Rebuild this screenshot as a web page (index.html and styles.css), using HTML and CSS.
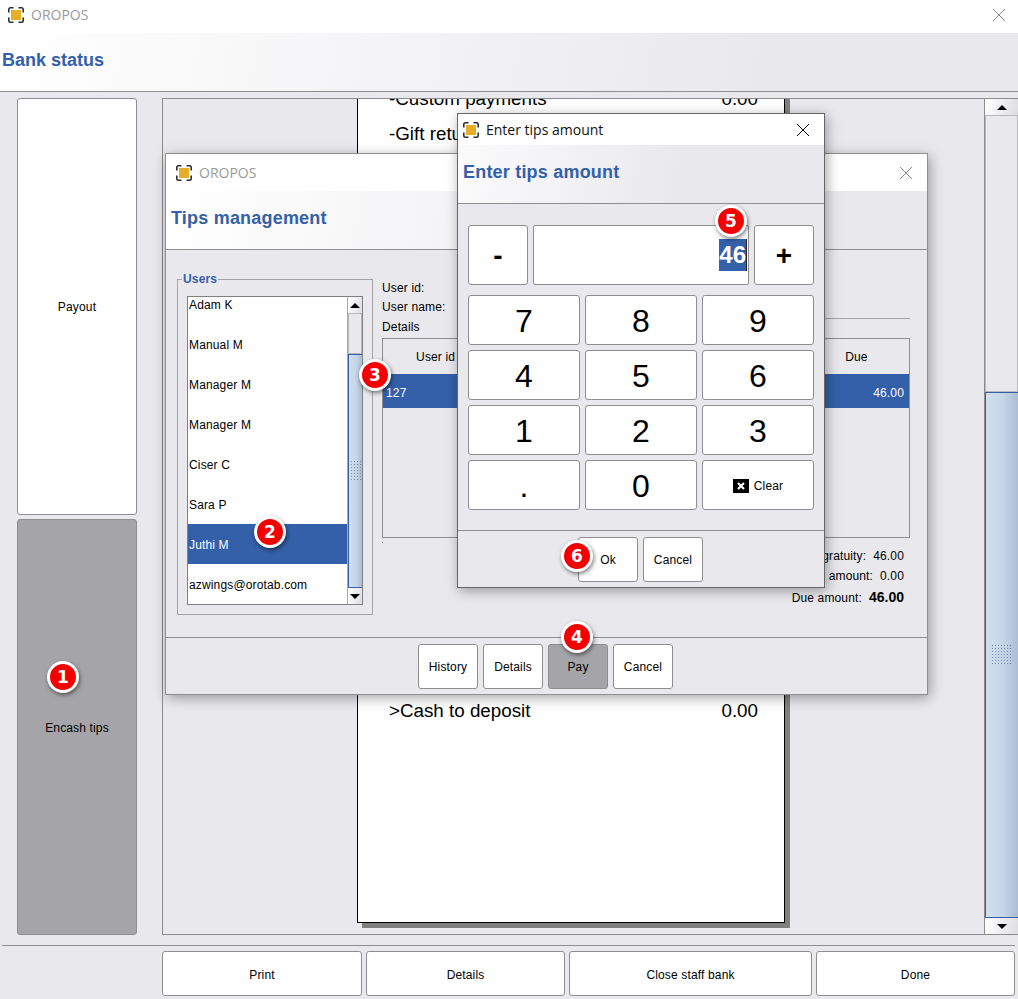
FILE: index.html
```html
<!DOCTYPE html>
<html lang="en">
<head>
  <meta charset="UTF-8" />
  <meta name="viewport" content="width=device-width, initial-scale=1" />
  <title>OROPOS</title>
  <link rel="stylesheet" href="styles.css">
</head>
<body>

  <svg class="defs" width="0" height="0">
    <symbol id="logo" viewBox="0 0 16 16">
      <path d="M0.800 5.500V2.300A1.500 1.500 0 0 1 2.300 0.800H5.500M10.500 0.800h3.200A1.500 1.500 0 0 1 15.200 2.300V5.500M15.200 10.500v3.200a1.500 1.500 0 0 1-1.500 1.500H10.500M5.500 15.200H2.300A1.500 1.500 0 0 1 0.800 13.700V10.500" fill="none" stroke="#2b2e36" stroke-width="1.600"/>
      <rect x="3" y="3" width="10" height="10" fill="#e5ae24"/>
    </symbol>
    <symbol id="close" viewBox="0 0 14 14">
      <path d="M1 1l12 12M13 1L1 13" fill="none" stroke="currentColor" stroke-width="1"/>
    </symbol>
  </svg>

  <div class="app">
    <div class="titlebar titlebar-main">
      <svg class="logo"><use href="#logo"/></svg>
      <span class="title-text">OROPOS</span>
      <svg class="close-x"><use href="#close"/></svg>
    </div>
    <div class="header"><h1>Bank status</h1></div>

    <div class="main">
      <div class="side">
        <button class="btn">Payout</button>
        <button class="btn btn-active">Encash tips</button>
      </div>
      <div class="report">
        <div class="report-view">
          <div class="paper">
            <div class="paper-row"><span>-Custom payments</span><span>0.00</span></div>
            <div class="paper-row"><span>-Gift returns</span><span>0.00</span></div>
            <div class="paper-row paper-total"><span>&gt;Cash to deposit</span><span>0.00</span></div>
          </div>
        </div>
        <div class="scrollbar scrollbar-wide">
          <div class="arrow arrow-up"></div>
          <div class="track track-main"></div>
          <div class="thumb thumb-main"><i class="grip"></i></div>
          <div class="arrow arrow-down"></div>
        </div>
      </div>
    </div>

    <div class="bottom">
      <button class="btn btn-print">Print</button>
      <button class="btn btn-details">Details</button>
      <button class="btn btn-closebank">Close staff bank</button>
      <button class="btn btn-done">Done</button>
    </div>
  </div>

  <!-- tips window -->
  <div class="dialog dialog-tips">
    <div class="titlebar titlebar-tips">
      <svg class="logo"><use href="#logo"/></svg>
      <span class="title-text">OROPOS</span>
      <svg class="close-x"><use href="#close"/></svg>
    </div>
    <div class="header header-tips"><h2>Tips management</h2></div>
    <div class="tips-body">
      <fieldset class="users">
        <legend>Users</legend>
        <div class="list">
          <div class="list-rows">
            <div class="list-row list-first">Adam K</div>
            <div class="list-row">Manual M</div>
            <div class="list-row">Manager M</div>
            <div class="list-row">Manager M</div>
            <div class="list-row">Ciser C</div>
            <div class="list-row">Sara P</div>
            <div class="list-row list-selected">Juthi M</div>
            <div class="list-row">azwings@orotab.com</div>
          </div>
          <div class="scrollbar">
            <div class="arrow arrow-up"></div>
            <div class="track track-list"></div>
            <div class="thumb thumb-list"><i class="grip"></i></div>
            <div class="arrow arrow-down"></div>
          </div>
        </div>
      </fieldset>
      <div class="info">
        <div class="info-row">User id:</div>
        <div class="info-row info-name"><span>User name:</span><span class="info-line"></span></div>
        <div class="info-row info-details">Details</div>
        <div class="table">
          <div class="table-head">
            <div>User id</div><div></div><div></div><div></div><div>Due</div>
          </div>
          <div class="table-row">
            <div>127</div><div></div><div></div><div></div><div class="num">46.00</div>
          </div>
        </div>
        <div class="table-dot"></div>
        <div class="totals">
          <div>Total gratuity:&nbsp; 46.00</div>
          <div>Paid amount:&nbsp; 0.00</div>
          <div class="total-due">Due amount:&nbsp; <b>46.00</b></div>
        </div>
      </div>
    </div>
    <div class="dialog-footer footer-tips">
      <button class="btn btn-small">History</button>
      <button class="btn btn-small">Details</button>
      <button class="btn btn-small btn-active">Pay</button>
      <button class="btn btn-small">Cancel</button>
    </div>
  </div>

  <!-- amount window -->
  <div class="dialog dialog-amount">
    <div class="titlebar titlebar-amount">
      <svg class="logo"><use href="#logo"/></svg>
      <span class="title-text">Enter tips amount</span>
      <svg class="close-x"><use href="#close"/></svg>
    </div>
    <div class="header header-amount"><h2>Enter tips amount</h2></div>
    <div class="amount-body">
      <div class="amount-row">
        <button class="btn btn-sign">-</button>
        <div class="amount-field"><span class="amount-value">46</span></div>
        <button class="btn btn-sign">+</button>
      </div>
      <div class="keypad">
        <button class="btn btn-key">7</button>
        <button class="btn btn-key">8</button>
        <button class="btn btn-key">9</button>
        <button class="btn btn-key">4</button>
        <button class="btn btn-key">5</button>
        <button class="btn btn-key">6</button>
        <button class="btn btn-key">1</button>
        <button class="btn btn-key">2</button>
        <button class="btn btn-key">3</button>
        <button class="btn btn-key">.</button>
        <button class="btn btn-key">0</button>
        <button class="btn btn-clear">
          <svg class="clear-icon" viewBox="0 0 16 14"><rect width="16" height="14" fill="#000"/><path d="M5 4l6 6M11 4l-6 6" stroke="#fff" stroke-width="2.200"/></svg>
          Clear
        </button>
      </div>
    </div>
    <div class="dialog-footer">
      <button class="btn btn-small">Ok</button>
      <button class="btn btn-small">Cancel</button>
    </div>
  </div>

  <span class="badge badge-1">1</span>
  <span class="badge badge-2">2</span>
  <span class="badge badge-3">3</span>
  <span class="badge badge-4">4</span>
  <span class="badge badge-5">5</span>
  <span class="badge badge-6">6</span>

</body>
</html>
```

FILE: styles.css
```css
* {
  box-sizing: border-box;
}

body {
  margin: 0;
  background-color: #e9e8ec;
  color: #000;
  font-family: 'Liberation Sans', Arial, sans-serif;
  font-size: 12px;
  letter-spacing: 0.15px;
  overflow: hidden;
}

.defs {
  position: absolute;
}

.app {
  display: flex;
  flex-direction: column;
  width: 1018px;
  height: 999px;
}

/* window title bars */
.titlebar {
  display: flex;
  align-items: center;
  height: 33px;
  padding: 0 12px 0 8px;
  background-color: #fff;
  flex: none;
}

.titlebar-main {
  padding-bottom: 4px;
}

.logo {
  width: 16px;
  height: 16px;
  flex: none;
}

.title-text {
  margin-left: 7px;
  color: #9a9a9a;
  font-family: 'Open Sans', sans-serif;
  font-size: 14px;
  letter-spacing: 0;
}

.close-x {
  width: 14px;
  height: 14px;
  margin-left: auto;
  color: #8a8a8a;
}

.titlebar-tips {
  height: 37px;
  padding: 0 14px 0 10px;
}

.titlebar-amount {
  height: 31px;
  padding: 0 14px 0 5px;
}

.titlebar-amount .title-text {
  color: #111;
}

.titlebar-amount .close-x {
  color: #000;
}

/* blue headers */
.header {
  display: flex;
  align-items: center;
  height: 59px;
  padding: 0 0 4px 2px;
  background: linear-gradient(100deg, #fff 0%, #e9e8ec 75%);
  border-bottom: 1px solid #8f8f8f;
  flex: none;
}

.header h1, .header h2 {
  margin: 0;
  color: #3360a9;
  font-size: 18px;
  font-weight: bold;
  letter-spacing: 0;
}

.header h2 {
  letter-spacing: 0.2px;
}

.header-tips {
  padding: 0 0 4px 5px;
}

.header-amount {
  padding: 0 0 4px 5px;
  background: linear-gradient(100deg, #fbfbfc 0%, #e9e8ec 60%);
}

/* buttons */
.btn {
  background-color: #fff;
  color: #000;
  border: 1px solid #8e8e8e;
  border-radius: 3px;
  padding: 2px 0 0;
  font-family: 'Liberation Sans', Arial, sans-serif;
  font-size: 12px;
  letter-spacing: 0.15px;
}

.btn-active {
  background-color: #a5a5a9;
}

/* main area */
.main {
  display: flex;
  height: 844px;
  padding: 6px 0 0 17px;
  flex: none;
}

.side {
  display: flex;
  flex-direction: column;
  gap: 4px;
  width: 120px;
  height: 837px;
  flex: none;
}

.side .btn {
  flex: 1;
}

.report {
  display: flex;
  width: 856px;
  height: 837px;
  margin-left: 25px;
  border: 1px solid #8c8c8c;
  border-right: none;
  flex: none;
}

.report-view {
  display: flex;
  flex-direction: column;
  justify-content: flex-end;
  flex: 1;
  overflow: hidden;
  padding: 0 0 11px 194px;
}

.paper {
  width: 428px;
  padding: 0 26px 194px 31px;
  background-color: #fff;
  border: 1px solid #000;
  box-shadow: 5px 5px 0 #808080;
  flex: none;
  font-size: 18.800px;
  letter-spacing: 0;
}

.paper-row {
  display: flex;
  justify-content: space-between;
  height: 35px;
  line-height: 35px;
}

.paper-total {
  margin-top: 542px;
}

/* scroll bars */
.scrollbar {
  display: flex;
  flex-direction: column;
  width: 15px;
  flex: none;
  border-left: 1px solid #a9a9a9;
  background-color: #e9e8ec;
}

.scrollbar-wide {
  width: 34px;
  border-left: 1px solid #8c8c8c;
}

.arrow {
  display: flex;
  align-items: center;
  justify-content: center;
  height: 16px;
  background: linear-gradient(100deg, #fff, #dedde2);
  flex: none;
}

.arrow::before {
  content: "";
  border-left: 5px solid transparent;
  border-right: 5px solid transparent;
}

.arrow-up::before {
  border-bottom: 5px solid #000;
}

.arrow-down::before {
  border-top: 5px solid #000;
}

.track {
  background-color: #e9e8ec;
  border: 1px solid #b9b9bd;
  flex: none;
}

.track-main {
  height: 277px;
}

.track-list {
  height: 41px;
}

.thumb {
  display: flex;
  align-items: center;
  justify-content: center;
  flex: 1;
  background: linear-gradient(90deg, #d2dfee 0%, #c5d5e7 55%, #adbdd2 100%);
  border-top: 1px solid #3360a9;
  border-bottom: 1px solid #3360a9;
  border-left: 1px solid #3360a9;
}

.grip {
  display: block;
  width: 22px;
  height: 22px;
  background-image: radial-gradient(circle, #6f8dbd 0.7px, transparent 0.9px);
  background-size: 3px 3px;
}

.thumb-list .grip {
  width: 11px;
  background-image: radial-gradient(circle, #7f8c9e 0.7px, transparent 0.9px);
}

/* bottom buttons */
.bottom {
  display: flex;
  gap: 4px;
  height: 52px;
  margin: 9px 3px 0 2px;
  padding: 5px 0 0 160px;
  border-top: 1px solid #8f8f8f;
}

.bottom .btn {
  height: 45px;
}

.btn-print {
  width: 200px;
}

.btn-details {
  width: 199px;
}

.btn-closebank {
  width: 243px;
}

.btn-done {
  width: 199px;
}

/* floating windows */
.dialog {
  position: absolute;
  display: flex;
  flex-direction: column;
  background-color: #e9e8ec;
  border: 1px solid #8f8f8f;
  box-shadow: 2px 3px 12px rgba(0, 0, 0, 0.35);
}

.dialog-tips {
  left: 165px;
  top: 153px;
  width: 763px;
  height: 542px;
}

.dialog-amount {
  left: 457px;
  top: 113px;
  width: 368px;
  height: 475px;
  border-color: #666;
}

.dialog-footer {
  display: flex;
  justify-content: center;
  gap: 5px;
  padding: 6px 1px 0 0;
  border-top: 1px solid #8f8f8f;
  flex: 1;
}

.footer-tips {
  padding-right: 2px;
}

.btn-small {
  width: 60px;
  height: 45px;
  padding-top: 1px;
}

/* tips window body */
.tips-body {
  display: flex;
  gap: 9px;
  height: 387px;
  padding: 22px 17px 0 11px;
  flex: none;
}

.users {
  width: 196px;
  height: 343px;
  margin: 0;
  padding: 0 9px 9px;
  border: 1px solid #a3a3a6;
  flex: none;
}

.users legend {
  padding: 0 1px;
  margin-left: -5px;
  color: #3360a9;
  font-size: 12px;
  font-weight: bold;
}

.list {
  display: flex;
  height: 309px;
  margin-top: 10px;
  background-color: #fff;
  border: 1px solid #808080;
  overflow: hidden;
}

.list-rows {
  flex: 1;
  min-width: 0;
}

.list-row {
  height: 40px;
  padding-left: 1px;
  line-height: 42px;
  white-space: nowrap;
}

.list-first {
  margin-top: -13px;
}

.list-selected {
  background-color: #3360a9;
  color: #fff;
}

.info {
  display: flex;
  flex-direction: column;
  flex: 1;
  padding-top: 7px;
}

.info-row {
  height: 19px;
  line-height: 19px;
}

.info-name {
  display: flex;
  gap: 20px;
  height: 21px;
}

.info-line {
  flex: 1;
  border-bottom: 1px solid #a3a3a6;
}

.info-details {
  height: 19px;
  line-height: 16px;
}

.table {
  height: 200px;
  background-color: #e9e8ec;
  border: 1px solid #8f8f8f;
  flex: none;
}

.table-head, .table-row {
  display: grid;
  grid-template-columns: repeat(5, 1fr);
}

.table-head {
  height: 35px;
  line-height: 37px;
  text-align: center;
}

.table-row {
  height: 34px;
  padding: 0 5px 0 3px;
  background-color: #3360a9;
  color: #fff;
  line-height: 38px;
}

.num {
  text-align: right;
}

.table-dot {
  width: 1px;
  height: 1px;
  margin-top: 4px;
  background-color: #777;
}

.totals {
  margin-top: 3px;
  padding-right: 6px;
  text-align: right;
  line-height: 20px;
}

.total-due {
  margin-top: 1px;
}

.total-due b {
  font-size: 14px;
  letter-spacing: 0;
}

/* amount window body */
.amount-body {
  height: 326px;
  padding: 21px 10px 0;
  flex: none;
}

.amount-row {
  display: flex;
  gap: 5px;
  height: 60px;
}

.btn-sign {
  width: 60px;
  font-size: 28px;
  font-weight: bold;
}

.amount-field {
  display: flex;
  align-items: center;
  justify-content: flex-end;
  width: 216px;
  padding-right: 1px;
  background-color: #fff;
  border: 1px solid #8e8e8e;
  border-radius: 2px;
}

.amount-value {
  height: 32px;
  background-color: #3360a9;
  border-right: 1px solid #222;
  color: #fff;
  font-size: 24px;
  font-weight: bold;
  letter-spacing: 0;
  line-height: 32px;
}

.keypad {
  display: grid;
  grid-template-columns: repeat(3, 1fr);
  grid-auto-rows: 50px;
  gap: 5px;
  margin-top: 10px;
}

.btn-key {
  font-size: 32px;
  letter-spacing: 0;
}

.btn-clear {
  display: flex;
  align-items: center;
  justify-content: center;
  gap: 5px;
}

.clear-icon {
  width: 16px;
  height: 14px;
}

/* numbered markers */
.badge {
  position: absolute;
  width: 32px;
  height: 32px;
  background-color: #f50000;
  border: 3px solid #fff;
  border-radius: 50%;
  box-shadow: 1px 2px 4px rgba(0, 0, 0, 0.5);
  color: #fff;
  font-family: 'DejaVu Sans', sans-serif;
  font-size: 17px;
  font-weight: bold;
  letter-spacing: 0;
  line-height: 26px;
  text-align: center;
}

.badge-1 {
  left: 47px;
  top: 661px;
}

.badge-2 {
  left: 254px;
  top: 516px;
}

.badge-3 {
  left: 359px;
  top: 359px;
}

.badge-4 {
  left: 561px;
  top: 621px;
}

.badge-5 {
  left: 715px;
  top: 205px;
}

.badge-6 {
  left: 561px;
  top: 540px;
}
```
